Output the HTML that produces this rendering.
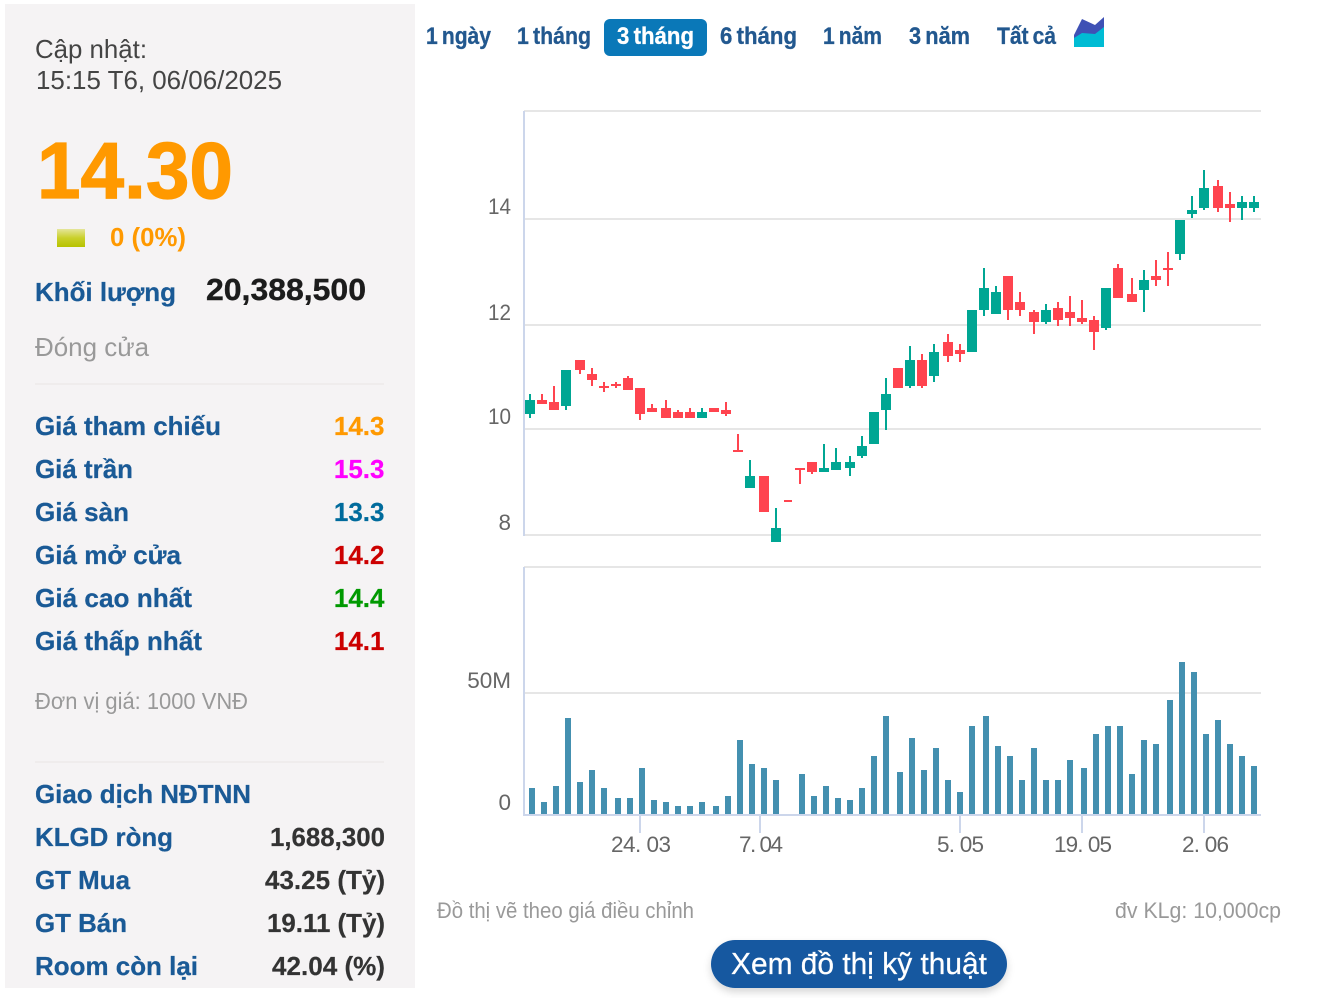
<!DOCTYPE html>
<html lang="vi"><head><meta charset="utf-8"><title>Đồ thị</title>
<style>
html,body{margin:0;padding:0;background:#fff;width:1334px;height:998px;overflow:hidden}
svg{display:block}
text{font-family:"Liberation Sans",Arial,sans-serif}
.b{font-weight:700}
.l{font-weight:700;font-size:26px;fill:#1a5a96;stroke:#1a5a96;stroke-width:.25px}
.v{font-weight:700;font-size:26px;fill:#333;stroke:#333;stroke-width:.2px}
.tab{font-weight:700;font-size:24px;fill:#22588f;stroke:#22588f;stroke-width:.3px;word-spacing:-2px}
.ax{font-size:22.500px;fill:#666}
.g{font-size:22px;fill:#999}
</style></head><body>
<svg xmlns="http://www.w3.org/2000/svg" width="1334" height="998" viewBox="0 0 1334 998">
<defs>
<linearGradient id="yg" x1="0" y1="0" x2="0" y2="1"><stop offset="0" stop-color="#e4e59a"/><stop offset=".5" stop-color="#c9d02a"/><stop offset="1" stop-color="#b7c200"/></linearGradient>
<filter id="sh" x="-10%" y="-30%" width="120%" height="170%"><feDropShadow dx="0" dy="4" stdDeviation="4" flood-color="#000" flood-opacity=".16"/></filter>
</defs>
<rect x="5" y="4" width="410" height="984" fill="#f5f3f4"/>

<text x="35" y="58" font-size="26" fill="#444" textLength="112" lengthAdjust="spacingAndGlyphs">Cập nhật:</text>
<text x="36" y="89" font-size="26" fill="#444" textLength="246" lengthAdjust="spacingAndGlyphs">15:15 T6, 06/06/2025</text>
<text x="37" y="198" font-size="80" class="b" fill="#ff9900" stroke="#ff9900" stroke-width="1.200" textLength="196" lengthAdjust="spacingAndGlyphs">14.30</text>
<rect x="57" y="229" width="28" height="18" fill="url(#yg)"/>
<text x="110" y="246" font-size="26" class="b" fill="#ff9900" textLength="76" lengthAdjust="spacingAndGlyphs">0 (0%)</text>
<text x="35" y="301" class="l" textLength="141" lengthAdjust="spacingAndGlyphs">Khối lượng</text>
<text x="206" y="300" font-size="31" class="b" fill="#1c1c1c" stroke="#1c1c1c" stroke-width=".4" textLength="160" lengthAdjust="spacingAndGlyphs">20,388,500</text>
<text x="35" y="356" font-size="26" fill="#999" textLength="114" lengthAdjust="spacingAndGlyphs">Đóng cửa</text>
<rect x="35" y="383" width="349" height="2" fill="#efecec"/>

<text x="35" y="435" class="l" textLength="186" lengthAdjust="spacingAndGlyphs">Giá tham chiếu</text>
<text x="35" y="478" class="l" textLength="98" lengthAdjust="spacingAndGlyphs">Giá trần</text>
<text x="35" y="521" class="l" textLength="94" lengthAdjust="spacingAndGlyphs">Giá sàn</text>
<text x="35" y="564" class="l" textLength="146" lengthAdjust="spacingAndGlyphs">Giá mở cửa</text>
<text x="35" y="607" class="l" textLength="157" lengthAdjust="spacingAndGlyphs">Giá cao nhất</text>
<text x="35" y="650" class="l" textLength="167" lengthAdjust="spacingAndGlyphs">Giá thấp nhất</text>
<text x="384.500" y="435" text-anchor="end" class="v" style="fill:#ff9900;stroke:#ff9900">14.3</text>
<text x="384.500" y="478" text-anchor="end" class="v" style="fill:#ff00ff;stroke:#ff00ff">15.3</text>
<text x="384.500" y="521" text-anchor="end" class="v" style="fill:#006b9c;stroke:#006b9c">13.3</text>
<text x="384.500" y="564" text-anchor="end" class="v" style="fill:#cc0000;stroke:#cc0000">14.2</text>
<text x="384.500" y="607" text-anchor="end" class="v" style="fill:#009900;stroke:#009900">14.4</text>
<text x="384.500" y="650" text-anchor="end" class="v" style="fill:#cc0000;stroke:#cc0000">14.1</text>

<text x="35" y="709" font-size="23" fill="#999" textLength="213" lengthAdjust="spacingAndGlyphs">Đơn vị giá: 1000 VNĐ</text>
<rect x="35" y="761" width="349" height="2" fill="#efecec"/>

<text x="35" y="803" class="l" textLength="216" lengthAdjust="spacingAndGlyphs">Giao dịch NĐTNN</text>
<text x="35" y="846" class="l" textLength="138" lengthAdjust="spacingAndGlyphs">KLGD ròng</text>
<text x="35" y="889" class="l" textLength="95" lengthAdjust="spacingAndGlyphs">GT Mua</text>
<text x="35" y="932" class="l" textLength="92" lengthAdjust="spacingAndGlyphs">GT Bán</text>
<text x="35" y="975" class="l" textLength="163" lengthAdjust="spacingAndGlyphs">Room còn lại</text>
<text x="270" y="846" class="v" textLength="115" lengthAdjust="spacingAndGlyphs">1,688,300</text>
<text x="265" y="889" class="v" textLength="120" lengthAdjust="spacingAndGlyphs">43.25 (Tỷ)</text>
<text x="267" y="932" class="v" textLength="118" lengthAdjust="spacingAndGlyphs">19.11 (Tỷ)</text>
<text x="272" y="975" class="v" textLength="113" lengthAdjust="spacingAndGlyphs">42.04 (%)</text>

<rect x="604" y="19" width="103" height="37" rx="6" fill="#0a78b8"/>
<text x="426" y="44" class="tab" textLength="65" lengthAdjust="spacingAndGlyphs">1 ngày</text>
<text x="517" y="44" class="tab" textLength="74" lengthAdjust="spacingAndGlyphs">1 tháng</text>
<text x="617" y="44" class="tab" style="fill:#fff;stroke:#fff" textLength="77" lengthAdjust="spacingAndGlyphs">3 tháng</text>
<text x="720" y="44" class="tab" textLength="77" lengthAdjust="spacingAndGlyphs">6 tháng</text>
<text x="823" y="44" class="tab" textLength="59" lengthAdjust="spacingAndGlyphs">1 năm</text>
<text x="909" y="44" class="tab" textLength="61" lengthAdjust="spacingAndGlyphs">3 năm</text>
<text x="997" y="44" class="tab" textLength="59" lengthAdjust="spacingAndGlyphs">Tất cả</text>
<path d="M1074 39V35L1082 19 1095 25 1104 17V28L1095 35 1082 34z" fill="#3f51b5"/>
<path d="M1074 47V38L1082 33 1095 34 1104 27V47z" fill="#00bcd4"/>

<path d="M524 110h737v2H524zM524 218h737v2H524zM524 324h737v2H524zM524 428h737v2H524zM524 534h737v2H524zM524 566h737v2H524zM524 692h737v2H524z" fill="#e6e6e6"/>
<path d="M523 111h2v425h-2zM523 567h2v249h-2zM523 814h738v2H523zM639 816h2v17h-2zM759 816h2v17h-2zM959 816h2v17h-2zM1081 816h2v17h-2zM1203 816h2v17h-2z" fill="#ccd6eb"/>

<path fill="#00a693" d="M529 394h2v24h-2zM525 400h10v14h-10zM565 370h2v40h-2zM561 370h10v36h-10zM701 408h2v10h-2zM697 412h10v6h-10zM749 460h2v28h-2zM745 476h10v12h-10zM775 508h2v34h-2zM771 528h10v14h-10zM823 444h2v28h-2zM819 468h10v4h-10zM835 448h2v22h-2zM831 462h10v8h-10zM849 456h2v20h-2zM845 462h10v6h-10zM861 436h2v22h-2zM857 446h10v10h-10zM869 412h10v32h-10zM885 378h2v52h-2zM881 394h10v16h-10zM909 346h2v42h-2zM905 360h10v26h-10zM933 344h2v38h-2zM929 352h10v24h-10zM967 310h10v42h-10zM983 268h2v48h-2zM979 288h10v22h-10zM995 286h2v28h-2zM991 292h10v22h-10zM1045 304h2v20h-2zM1041 310h10v12h-10zM1105 288h2v42h-2zM1101 288h10v40h-10zM1143 270h2v42h-2zM1139 280h10v10h-10zM1179 220h2v40h-2zM1175 220h10v34h-10zM1191 196h2v22h-2zM1187 210h10v4h-10zM1203 170h2v40h-2zM1199 188h10v20h-10zM1241 196h2v24h-2zM1237 202h10v6h-10zM1253 196h2v16h-2zM1249 202h10v6h-10z"/>
<path fill="#ff444f" d="M541 394h2v10h-2zM537 400h10v4h-10zM553 386h2v24h-2zM549 402h10v8h-10zM579 360h2v14h-2zM575 360h10v10h-10zM591 368h2v18h-2zM587 374h10v6h-10zM603 382h2v10h-2zM599 386h10v2h-10zM615 382h2v6h-2zM611 384h10v2h-10zM627 376h2v14h-2zM623 378h10v12h-10zM639 388h2v32h-2zM635 388h10v26h-10zM651 404h2v8h-2zM647 408h10v4h-10zM665 400h2v18h-2zM661 408h10v10h-10zM677 410h2v8h-2zM673 412h10v6h-10zM689 408h2v10h-2zM685 412h10v6h-10zM709 408h10v4h-10zM725 402h2v14h-2zM721 410h10v4h-10zM737 434h2v18h-2zM733 450h10v2h-10zM759 476h10v36h-10zM784 500h8v2h-8zM799 468h2v16h-2zM795 468h10v2h-10zM811 462h2v12h-2zM807 462h10v10h-10zM893 368h10v20h-10zM921 354h2v34h-2zM917 360h10v26h-10zM947 334h2v28h-2zM943 342h10v14h-10zM959 344h2v18h-2zM955 350h10v4h-10zM1007 276h2v44h-2zM1003 276h10v34h-10zM1019 292h2v24h-2zM1015 302h10v8h-10zM1033 310h2v24h-2zM1029 312h10v10h-10zM1057 302h2v24h-2zM1053 308h10v12h-10zM1069 296h2v30h-2zM1065 312h10v6h-10zM1081 300h2v24h-2zM1077 318h10v4h-10zM1093 316h2v34h-2zM1089 320h10v12h-10zM1117 264h2v34h-2zM1113 268h10v30h-10zM1131 278h2v24h-2zM1127 294h10v8h-10zM1155 260h2v26h-2zM1151 276h10v4h-10zM1167 252h2v34h-2zM1163 268h10v2h-10zM1217 180h2v32h-2zM1213 186h10v22h-10zM1229 192h2v30h-2zM1225 204h10v4h-10z"/>

<path fill="#4490b0" d="M529 788h6v26h-6zM541 802h6v12h-6zM553 786h6v28h-6zM565 718h6v96h-6zM577 782h6v32h-6zM589 770h6v44h-6zM601 788h6v26h-6zM615 798h6v16h-6zM627 798h6v16h-6zM639 768h6v46h-6zM651 800h6v14h-6zM663 802h6v12h-6zM675 806h6v8h-6zM687 806h6v8h-6zM699 802h6v12h-6zM713 806h6v8h-6zM725 796h6v18h-6zM737 740h6v74h-6zM749 764h6v50h-6zM761 768h6v46h-6zM773 780h6v34h-6zM799 774h6v40h-6zM811 796h6v18h-6zM823 786h6v28h-6zM835 798h6v16h-6zM847 800h6v14h-6zM859 788h6v26h-6zM871 756h6v58h-6zM883 716h6v98h-6zM897 772h6v42h-6zM909 738h6v76h-6zM921 770h6v44h-6zM933 748h6v66h-6zM945 780h6v34h-6zM957 792h6v22h-6zM969 726h6v88h-6zM983 716h6v98h-6zM995 746h6v68h-6zM1007 756h6v58h-6zM1019 780h6v34h-6zM1031 748h6v66h-6zM1043 780h6v34h-6zM1055 780h6v34h-6zM1067 760h6v54h-6zM1081 768h6v46h-6zM1093 734h6v80h-6zM1105 726h6v88h-6zM1117 726h6v88h-6zM1129 774h6v40h-6zM1141 740h6v74h-6zM1153 744h6v70h-6zM1167 700h6v114h-6zM1179 662h6v152h-6zM1191 672h6v142h-6zM1203 734h6v80h-6zM1215 720h6v94h-6zM1227 744h6v70h-6zM1239 756h6v58h-6zM1251 766h6v48h-6z"/>

<text x="511" y="214" text-anchor="end" class="ax" textLength="23" lengthAdjust="spacingAndGlyphs">14</text>
<text x="511" y="320" text-anchor="end" class="ax" textLength="23" lengthAdjust="spacingAndGlyphs">12</text>
<text x="511" y="424" text-anchor="end" class="ax" textLength="23" lengthAdjust="spacingAndGlyphs">10</text>
<text x="511" y="530" text-anchor="end" class="ax">8</text>
<text x="511" y="688" text-anchor="end" class="ax">50M</text>
<text x="511" y="810" text-anchor="end" class="ax">0</text>
<text x="611" y="852" class="ax" textLength="60" lengthAdjust="spacing">24. 03</text>
<text x="739" y="852" class="ax" textLength="44" lengthAdjust="spacing">7. 04</text>
<text x="937" y="852" class="ax" textLength="47" lengthAdjust="spacing">5. 05</text>
<text x="1054" y="852" class="ax" textLength="58" lengthAdjust="spacing">19. 05</text>
<text x="1182" y="852" class="ax" textLength="47" lengthAdjust="spacing">2. 06</text>

<text x="437" y="918" class="g" textLength="257" lengthAdjust="spacingAndGlyphs">Đồ thị vẽ theo giá điều chỉnh</text>
<text x="1115" y="918" class="g" textLength="166" lengthAdjust="spacingAndGlyphs">đv KLg: 10,000cp</text>

<rect x="711" y="940" width="296" height="48" rx="24" fill="#1559a0" filter="url(#sh)"/>
<text x="731" y="974" font-size="31" fill="#fff" stroke="#fff" stroke-width=".25" textLength="256" lengthAdjust="spacingAndGlyphs">Xem đồ thị kỹ thuật</text>
</svg>
</body></html>
